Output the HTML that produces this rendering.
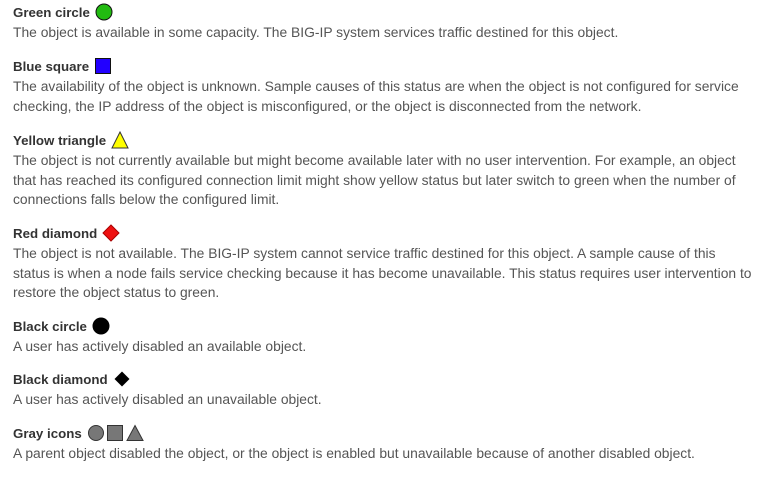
<!DOCTYPE html>
<html><head><meta charset="utf-8"><style>
html,body{margin:0;padding:0;background:#fff;width:773px;height:484px;overflow:hidden}
body{font-family:"Liberation Sans",Arial,sans-serif;font-size:13.85px;color:#555}
.b{position:absolute;left:13px;white-space:nowrap}
.t{font-weight:bold;color:#333;line-height:20px;height:20px;font-size:13.3px}
.t svg{vertical-align:-4px;margin-left:5px}
.p{line-height:19.7px}
</style></head><body>
<div class="b" style="top:3px"><div class="t">Green circle<svg width="18" height="18"><circle cx="9" cy="9" r="8" fill="#22bb11" stroke="#111" stroke-width="1"/></svg></div><div class="p">The object is available in some capacity. The BIG-IP system services traffic destined for this object.</div></div>
<div class="b" style="top:57px"><div class="t">Blue square<svg width="18" height="18"><rect x="1.5" y="1.5" width="15" height="15" fill="#2200ff" stroke="#111"/></svg></div><div class="p">The availability of the object is unknown. Sample causes of this status are when the object is not configured for service<br>checking, the IP address of the object is misconfigured, or the object is disconnected from the network.</div></div>
<div class="b" style="top:131px"><div class="t">Yellow triangle<svg width="18" height="18"><polygon points="9,1 17,17 1,17" fill="#ffff00" stroke="#333"/></svg></div><div class="p">The object is not currently available but might become available later with no user intervention. For example, an object<br>that has reached its configured connection limit might show yellow status but later switch to green when the number of<br>connections falls below the configured limit.</div></div>
<div class="b" style="top:224px"><div class="t">Red diamond<svg width="18" height="18"><polygon points="9,1 17,9 9,17 1,9" fill="#ee1111" stroke="#aa0000"/></svg></div><div class="p">The object is not available. The BIG-IP system cannot service traffic destined for this object. A sample cause of this<br>status is when a node fails service checking because it has become unavailable. This status requires user intervention to<br>restore the object status to green.</div></div>
<div class="b" style="top:317px"><div class="t">Black circle<svg width="18" height="18"><circle cx="9" cy="9" r="8.5" fill="#000"/></svg></div><div class="p">A user has actively disabled an available object.</div></div>
<div class="b" style="top:370px"><div class="t">Black diamond<svg width="18" height="18"><polygon points="9,1.5 16.5,9 9,16.5 1.5,9" fill="#000"/></svg></div><div class="p">A user has actively disabled an unavailable object.</div></div>
<div class="b" style="top:424px"><div class="t">Gray icons<svg width="58" height="18"><circle cx="9" cy="9" r="7.5" fill="#777" stroke="#333"/><rect x="20.5" y="1.5" width="15" height="15" fill="#777" stroke="#333"/><polygon points="48,1.5 56,16.5 40,16.5" fill="#777" stroke="#333"/></svg></div><div class="p">A parent object disabled the object, or the object is enabled but unavailable because of another disabled object.</div></div>
</body></html>
